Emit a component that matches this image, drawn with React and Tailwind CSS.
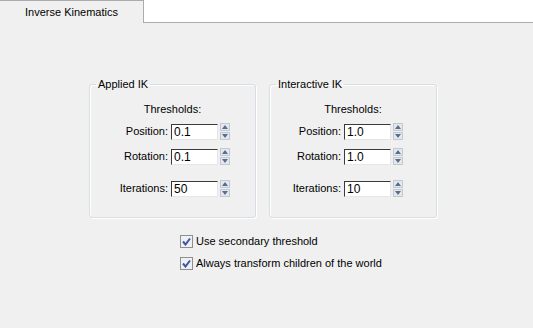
import React from 'react';

const Spinner = () => (
    <div className="flex flex-col w-[10px] h-[17px] gap-[1px]">
        <div className="flex-1 flex items-center justify-center bg-[#e4e8ee] border border-[#c3c9d3]">
            <svg width="6" height="4" viewBox="0 0 6 4"><path d="M3 0 L6 4 L0 4 Z" fill="#5b6d8c" /></svg>
        </div>
        <div className="flex-1 flex items-center justify-center bg-[#e4e8ee] border border-[#c3c9d3]">
            <svg width="6" height="4" viewBox="0 0 6 4"><path d="M0 0 L6 0 L3 4 Z" fill="#5b6d8c" /></svg>
        </div>
    </div>
);

const Campo = ({ label, value, labelClass, extra }) => (
    <div className={`flex items-center ${extra}`}>
        <div className={`${labelClass} text-right pr-[3px] leading-[13px]`}>{label}</div>
        <div className="w-[47px] h-[16px] bg-white border border-t-[#3a3a3a] border-l-[#3a3a3a] border-r-[#e6e6e6] border-b-[#e6e6e6] pl-[2px] text-[12px] leading-[14px]">
            {value}
        </div>
        <div className="ml-[2px]">
            <Spinner />
        </div>
    </div>
);

const Grupo = ({ titulo, pos, rot, iter, ancho, labelClass }) => (
    <fieldset className={`${ancho} border border-[#d5dfe5] rounded-[3px] shadow-[inset_1px_1px_0_#ffffff,1px_1px_0_#ffffff] pb-[20px]`}>
        <legend className="ml-[6px] px-[2px] leading-[13px]">{titulo}</legend>
        <div className="text-center leading-[13px] mt-[12px]">Thresholds:</div>
        <Campo label="Position:" value={pos} labelClass={labelClass} extra="mt-[7px]" />
        <Campo label="Rotation:" value={rot} labelClass={labelClass} extra="mt-[8px]" />
        <Campo label="Iterations:" value={iter} labelClass={labelClass} extra="mt-[15px]" />
    </fieldset>
);

const Check = ({ texto, extra }) => (
    <div className={`flex items-center ${extra}`}>
        <div className="w-[13px] h-[13px] border border-[#8f8f8f] bg-[#eef0f3] flex items-center justify-center">
            <svg width="9" height="9" viewBox="0 0 9 9">
                <path d="M1 4.5 L3.5 7.5 L8 1.5" stroke="#3d57a0" strokeWidth="2" fill="none" />
            </svg>
        </div>
        <span className="ml-[3px] leading-[13px]">{texto}</span>
    </div>
);

const App = () => {
    return (
        <div className="w-[533px] h-[328px] bg-[#f0f0f0] text-[11px] text-black font-['Liberation_Sans',Arial,sans-serif] overflow-hidden">
            <div className="flex h-[23px] bg-white">
                <div className="w-[144px] border-t border-r border-[#acacac] bg-[#f0f0f0] flex items-center justify-center">
                    Inverse Kinematics
                </div>
                <div className="flex-1 border-b border-[#acacac]"></div>
            </div>

            <div className="flex gap-[13px] pl-[89px] pt-[55px]">
                <Grupo titulo="Applied IK" pos="0.1" rot="0.1" iter="50" ancho="w-[167px]" labelClass="w-[81px]" />
                <Grupo titulo="Interactive IK" pos="1.0" rot="1.0" iter="10" ancho="w-[168px]" labelClass="w-[74px]" />
            </div>

            <div className="pl-[180px] pt-[17px]">
                <Check texto="Use secondary threshold" />
                <Check texto="Always transform children of the world" extra="mt-[9px]" />
            </div>
        </div>
    );
};

export default App;
